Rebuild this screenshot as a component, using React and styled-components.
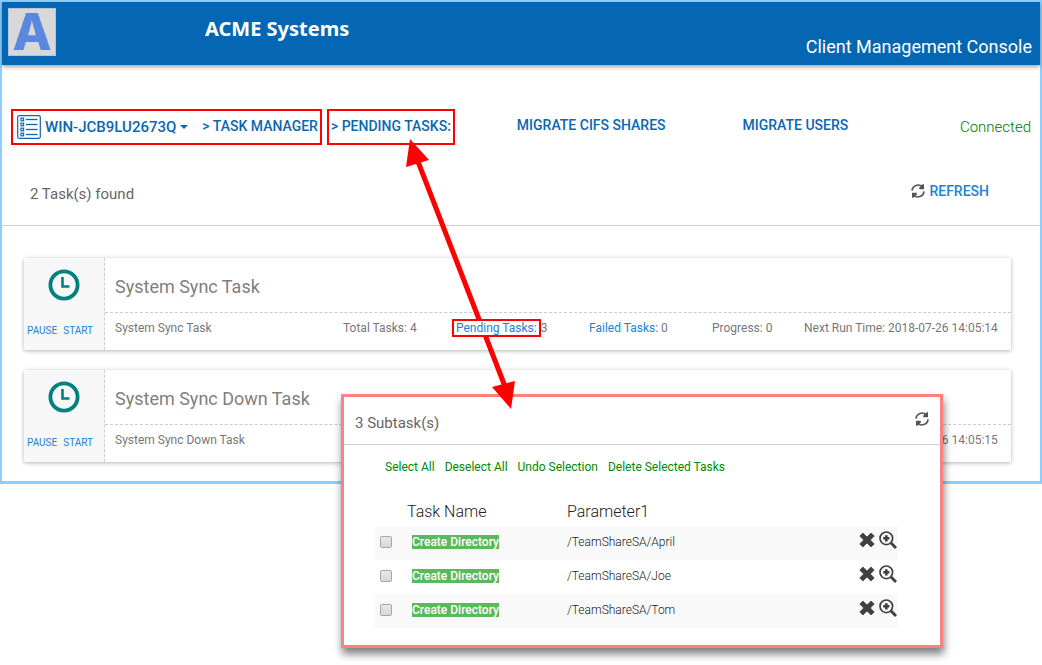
import React, { useState } from 'react'
import styled, { createGlobalStyle } from 'styled-components'

const tasks = [
  { id: 1, name: 'System Sync Task', total: 4, pending: 3, failed: 0, progress: 0, next: '2018-07-26 14:05:14', marked: true },
  { id: 2, name: 'System Sync Down Task', total: 4, pending: 0, failed: 0, progress: 0, next: '2018-07-26 14:05:15' },
]

const subtasks = [
  { id: 1, name: 'Create Directory', param: '/TeamShareSA/April' },
  { id: 2, name: 'Create Directory', param: '/TeamShareSA/Joe' },
  { id: 3, name: 'Create Directory', param: '/TeamShareSA/Tom' },
]

//Icons

const ListIcon = () => (
  <svg width="24" height="24" viewBox="0 0 24 24" fill="none" stroke="#0a67b2" aria-hidden="true">
    <rect x="0.7" y="0.7" width="22.6" height="22.6" rx="1.5" strokeWidth="1.2" />
    {[4.5, 9.5, 14.5, 19.5].map((y) => (
      <g key={y}>
        <rect x="4" y={y - 1.3} width="2.6" height="2.6" strokeWidth="1.2" />
        <path d={`M9 ${y}H20.5`} strokeWidth="1.3" />
      </g>
    ))}
  </svg>
)

const RefreshIcon = () => (
  <svg width="14" height="14" viewBox="0 0 14 14" fill="none" stroke="#555" strokeWidth="1.6" aria-hidden="true">
    <path d="M1 6.6A6 6 0 0 1 11.4 3" />
    <path d="M13 7.4A6 6 0 0 1 2.6 11" />
    <path d="M13 0.3V5.2H8.2V3.8L11.6 0.3Z" fill="#555" stroke="none" />
    <path d="M1 13.7V8.8H5.8V10.2L2.4 13.7Z" fill="#555" stroke="none" />
  </svg>
)

const ClockIcon = () => (
  <svg width="32" height="32" viewBox="0 0 32 32" fill="none" stroke="#008080" aria-hidden="true">
    <circle cx="16" cy="16" r="13.6" strokeWidth="3.8" />
    <path d="M14.5 8V17.5H21.5" strokeWidth="2.6" />
  </svg>
)

const CrossIcon = () => (
  <svg width="16" height="16" viewBox="0 0 16 16" aria-hidden="true">
    <path
      d="M3.9 1 8 5.1 12.1 1 15.2 4.1 11.3 8 15.2 11.9 12.1 15 8 10.9 3.9 15 0.8 11.9 4.7 8 0.8 4.1Z"
      fill="#404040" stroke="#404040" strokeWidth="0.8" strokeLinejoin="round"
    />
  </svg>
)

const ZoomIcon = () => (
  <svg width="18" height="18" viewBox="0 0 18 18" fill="none" stroke="#404040" aria-hidden="true">
    <circle cx="7.3" cy="7.3" r="6.3" strokeWidth="1.7" />
    <path d="M7.3 4.2V10.4M4.2 7.3H10.4" strokeWidth="2.6" />
    <path d="M11.8 11.8 17 17" strokeWidth="2.8" />
  </svg>
)

function TaskCard({ task }) {
  return (
    <Card>
      <Side>
        <ClockIcon />
        <SideActions>
          <SmallButton>PAUSE</SmallButton>
          <SmallButton>START</SmallButton>
        </SideActions>
      </Side>
      <Body>
        <h2>{task.name}</h2>
        <Stats>
          <span>{task.name}</span>
          <span>Total Tasks: {task.total}</span>
          <span>
            <StatLink href="#pending" $marked={task.marked}>Pending Tasks:</StatLink>
            {task.marked ? '' : ' '}{task.pending}
          </span>
          <span><a href="#failed">Failed Tasks:</a> {task.failed}</span>
          <span>Progress: {task.progress}</span>
          <span>Next Run Time: {task.next}</span>
        </Stats>
      </Body>
    </Card>
  )
}

function Subtasks() {

  const [selected, setSelected] = useState([])

  const toggle = (id) => {
    setSelected(selected.includes(id) ? selected.filter((s) => s !== id) : [...selected, id])
  }

  return (
    <Dialog role="dialog" aria-label="Subtasks">
      <DialogHead>
        <h3>3 Subtask(s)</h3>
        <IconButton aria-label="Refresh subtasks"><RefreshIcon /></IconButton>
      </DialogHead>

      <DialogActions>
        <button onClick={() => setSelected(subtasks.map((s) => s.id))}>Select All</button>
        <button onClick={() => setSelected([])}>Deselect All</button>
        <button onClick={() => setSelected([])}>Undo Selection</button>
        <button>Delete Selected Tasks</button>
      </DialogActions>

      <Table>
        <colgroup>
          <col width="32" />
          <col width="160" />
          <col />
          <col width="44" />
        </colgroup>
        <thead>
          <tr>
            <th></th>
            <th>Task Name</th>
            <th>Parameter1</th>
            <th></th>
          </tr>
        </thead>
        <tbody>
          {subtasks.map((sub) => (
            <tr key={sub.id}>
              <td>
                <Check
                  type="checkbox"
                  aria-label={`Select ${sub.param}`}
                  checked={selected.includes(sub.id)}
                  onChange={() => toggle(sub.id)}
                />
              </td>
              <td><Tag>{sub.name}</Tag></td>
              <td>{sub.param}</td>
              <td>
                <RowActions>
                  <IconButton aria-label="Delete"><CrossIcon /></IconButton>
                  <IconButton aria-label="Details"><ZoomIcon /></IconButton>
                </RowActions>
              </td>
            </tr>
          ))}
        </tbody>
      </Table>
    </Dialog>
  )
}

function App() {
  return (
    <Page>
      <GlobalStyle />

      <Console>
        <Header>
          <Logo>A</Logo>
          <Brand>ACME Systems</Brand>
          <Product>Client Management Console</Product>
        </Header>

        <Nav>
          <Marked>
            <ServerButton>
              <ListIcon />
              WIN-JCB9LU2673Q
              <Caret />
            </ServerButton>
            <NavLink href="#tasks">&gt; TASK MANAGER</NavLink>
          </Marked>
          <Marked>
            <NavLink href="#pending">&gt; PENDING TASKS:</NavLink>
          </Marked>
          <Links>
            <NavLink href="#cifs">MIGRATE CIFS SHARES</NavLink>
            <NavLink href="#users">MIGRATE USERS</NavLink>
          </Links>
          <Status>Connected</Status>
        </Nav>

        <Summary>
          <p>2 Task(s) found</p>
          <RefreshButton><RefreshIcon />REFRESH</RefreshButton>
        </Summary>

        <TaskList>
          {tasks.map((task) => <TaskCard key={task.id} task={task} />)}
        </TaskList>
      </Console>

      <Subtasks />

      <Arrow width="110" height="272" viewBox="0 0 110 272" aria-hidden="true">
        <path d="M11 20 100 250" stroke="#f00" strokeWidth="5" />
        <path d="M4 0 23 21 0 28Z" fill="#f00" />
        <path d="M105 270 86 248 109 242Z" fill="#f00" />
      </Arrow>
    </Page>
  )
}

const GlobalStyle = createGlobalStyle`
  * {
    box-sizing: border-box;
  }

  body {
    margin: 0;
    background: #fff;
    font-family: Roboto, "Liberation Sans", sans-serif;
    color: #666;
  }

  h1, h2, h3, p {
    margin: 0;
    font-weight: 400;
  }

  a {
    color: #1a83d6;
    text-decoration: none;
  }

  button {
    padding: 0;
    border: none;
    background: none;
    font: inherit;
    cursor: pointer;
  }
`

const Page = styled.div `
  position: relative;
  min-height: 100vh;
`

const Console = styled.div `
  border: 2px solid #8ccfff;
  border-bottom-width: 3px;
`

const Header = styled.header `
  display: flex;
  height: 63px;
  padding: 6px 8px 0 6px;
  background-color: #0567b3;
  box-shadow: 0 2px 4px rgba(0, 0, 0, 0.35);
  color: white;
`

const Logo = styled.div `
  width: 48px;
  height: 48px;
  background-color: #d8d8d8;
  border: 1px solid #b4c3dc;
  color: #5b87de;
  font: 800 51px/46px Inter, "Liberation Sans", sans-serif;
  display: flex;
  justify-content: center;
`

const Brand = styled.h1 `
  margin: 7px 0 0 149px;
  font: bold 20px/28px "Noto Sans", sans-serif;
`

const Product = styled.p `
  margin: 26px 0 0 auto;
  font-size: 18px;
  line-height: 26px;
`

const Nav = styled.nav `
  display: flex;
  align-items: center;
  gap: 5px;
  margin-top: 44px;
  padding: 0 9px;
`

const Marked = styled.div `
  display: flex;
  align-items: center;
  gap: 14px;
  height: 36px;
  padding: 0 2px;
  border: 2px solid #f00;
  white-space: nowrap;
`

const NavLink = styled.a `
  font-size: 14px;
  font-weight: 500;
  line-height: 16px;
  padding-bottom: 2px;
  color: #0a67b2;
  white-space: nowrap;
`

const ServerButton = styled.button `
  display: flex;
  align-items: center;
  gap: 4px;
  padding-left: 2px;
  font-size: 15px;
  font-weight: 500;
  color: #0a67b2;
`

const Caret = styled.span `
  border: 4px solid transparent;
  border-top-color: #0a67b2;
  border-bottom: none;
`

const Links = styled.div `
  display: flex;
  gap: 77px;
  padding: 0 0 2px 57px;
`

const Status = styled.p `
  margin-left: auto;
  font-size: 15px;
  font-weight: 300;
  color: #007a00;
`

const Summary = styled.div `
  display: flex;
  justify-content: space-between;
  align-items: center;
  height: 81px;
  padding: 18px 51px 0 28px;
  border-bottom: 1px solid #ccc;
  font-size: 15px;
`

const RefreshButton = styled.button `
  display: flex;
  align-items: center;
  gap: 4px;
  padding-bottom: 6px;
  font-size: 14px;
  font-weight: 500;
  color: #1a83d6;
`

const TaskList = styled.main `
  display: flex;
  flex-direction: column;
  gap: 20px;
  padding: 32px 29px 19px 22px;
`

const Card = styled.section `
  display: flex;
  height: 92px;
  border-radius: 2px;
  box-shadow: 0 1px 4px rgba(0, 0, 0, 0.3);
`

const Side = styled.div `
  display: flex;
  flex-direction: column;
  align-items: center;
  justify-content: space-between;
  width: 81px;
  padding: 11px 0 12px;
  background-color: #f7f7f7;
  border-right: 1px dashed #ccc;
`

const SideActions = styled.div `
  display: flex;
  gap: 6px;
  padding-right: 8px;
`

const SmallButton = styled.button `
  font-size: 10px;
  line-height: 14px;
  color: #1a83d6;
`

const Body = styled.div `
  flex: 1;
  min-width: 0;

  h2 {
    height: 55px;
    padding: 2px 10px 0;
    border-bottom: 1px dashed #ccc;
    font-size: 18px;
    line-height: 54px;
    color: #808080;
  }
`

const Stats = styled.div `
  display: grid;
  grid-template-columns:
    minmax(0, 228fr) minmax(0, 113fr) minmax(0, 133fr)
    minmax(0, 123fr) minmax(0, 92fr) minmax(0, 194fr);
  padding: 6px 13px 0 10px;
  font-size: 12px;
  line-height: 18px;
  color: #777;
  white-space: nowrap;
`

const StatLink = styled.a `
  ${({ $marked }) => $marked && `
    display: inline-block;
    position: relative;
    z-index: 3;
    margin: -1px 0 -1px -4px;
    padding: 0 2px;
    border: 2px solid #f00;
    background-color: white;
    line-height: 14px;
  `}
`

const Dialog = styled.section `
  position: absolute;
  z-index: 1;
  top: 394px;
  left: 341px;
  width: 602px;
  padding-bottom: 17px;
  border: 3px solid #ff8080;
  background-color: white;
  box-shadow: 1px 6px 8px rgba(0, 0, 0, 0.5);
`

const DialogHead = styled.div `
  display: flex;
  justify-content: space-between;
  align-items: flex-start;
  height: 48px;
  padding: 15px 11px 0;
  border-bottom: 1px solid #ccc;

  h3 {
    font-size: 15px;
    line-height: 22px;
  }
`

const DialogActions = styled.div `
  display: flex;
  gap: 10px;
  padding: 14px 41px 0;

  button {
    font-size: 12px;
    line-height: 16px;
    color: #008a00;
  }
`

const Table = styled.table `
  width: 523px;
  margin: 23px 0 0 31px;
  table-layout: fixed;
  border-collapse: collapse;
  font-size: 12px;
  font-weight: 300;
  color: #222;

  th, td {
    padding: 0;
    text-align: left;
  }

  th {
    height: 28px;
    padding-bottom: 2px;
    font-size: 16px;
    font-weight: 300;
  }

  td {
    height: 34px;
    padding-bottom: 2px;
  }

  tbody tr:nth-child(odd) {
    background-color: #f9f9f9;
  }
`

const Check = styled.input `
  display: block;
  appearance: none;
  width: 12px;
  height: 12px;
  margin: 0 0 0 5px;
  border: 1px solid #a8a8a8;
  border-radius: 2px;
  background: linear-gradient(#e8e8e8, #d8d8d8);

  &:checked {
    background: #1a83d6;
  }
`

const Tag = styled.span `
  margin-left: 5px;
  background-color: #5cb85c;
  color: white;
  font-weight: 500;
`

const RowActions = styled.div `
  display: flex;
  align-items: center;
  justify-content: flex-end;
  gap: 4px;
  padding: 0 1px 4px 0;
`

const IconButton = styled.button `
  display: flex;
`

const Arrow = styled.svg `
  position: absolute;
  z-index: 2;
  top: 139px;
  left: 406px;
  pointer-events: none;
`

export default App
